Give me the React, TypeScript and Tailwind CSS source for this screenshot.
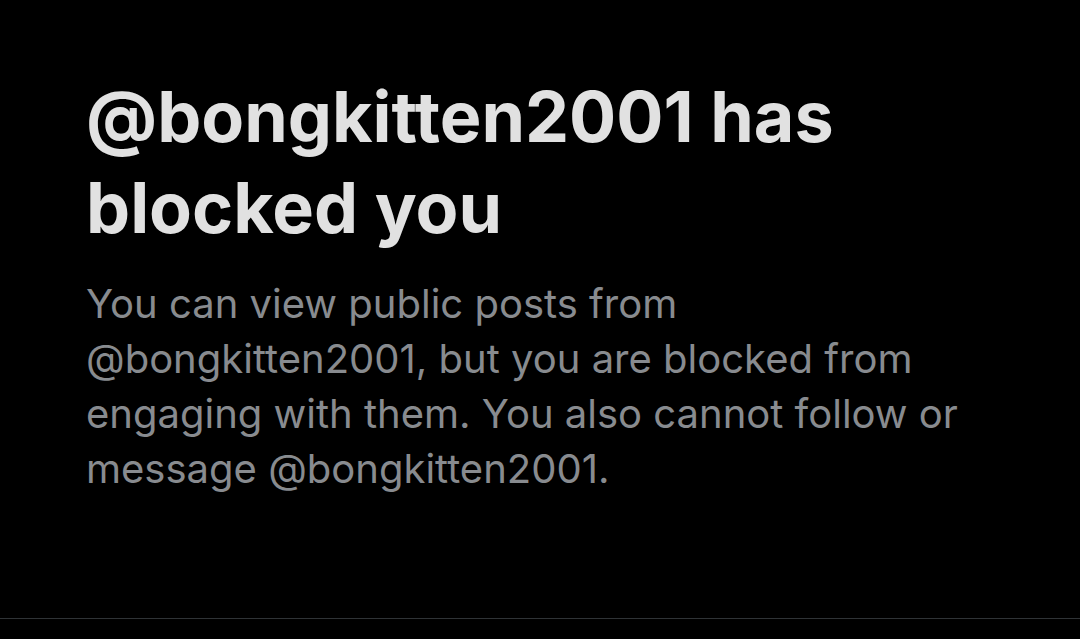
export default function App() {
  return (
    <div className="flex h-[639px] w-[1080px] flex-col bg-black font-['Inter',sans-serif]">
      <div className="flex flex-1 flex-col pl-[86px] pt-[71px]">
        <h1 className="text-[70px] font-bold leading-[91px] whitespace-nowrap text-[#e1e1e1]">
          @bongkitten2001 has
          <br />
          blocked you
        </h1>
        <p className="mt-[23px] text-[40px] leading-[55px] whitespace-nowrap text-[#888b8f]">
          You can view public posts from
          <br />
          @bongkitten2001, but you are blocked from
          <br />
          engaging with them. You also cannot follow or
          <br />
          message @bongkitten2001.
        </p>
      </div>
      <div className="mb-[20px] h-px w-full bg-[#2f3336]" />
    </div>
  );
}
